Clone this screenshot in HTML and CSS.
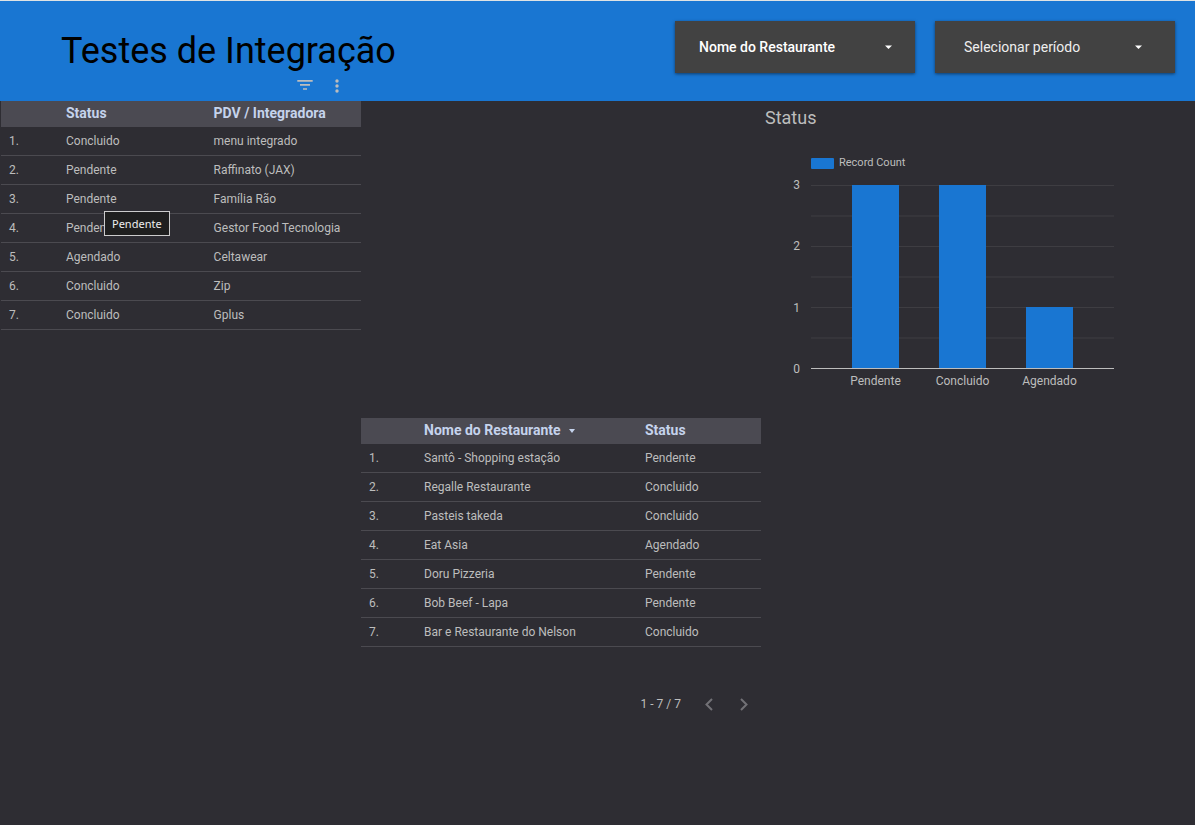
FILE: index.html
```html
<!DOCTYPE html>
<html lang="pt-BR">
<head>
<meta charset="utf-8">
<meta name="viewport" content="width=device-width, initial-scale=1">
<title>Testes de Integração</title>
<link rel="stylesheet" href="styles.css">
</head>
<body>
<header class="banner">
  <div class="banner-main">
    <h1 class="title">Testes de Integração</h1>
    <div class="tools">
      <button class="tool" type="button" aria-label="Filtrar">
        <svg width="16" height="16" viewBox="0 0 16 16"><path d="M.3 2h15.4v1.8H.3zM3 6h10v1.8H3zM6 10.2h4v1.6H6z"/></svg>
      </button>
      <button class="tool" type="button" aria-label="Mais opções">
        <svg width="16" height="16" viewBox="0 0 16 16"><circle cx="8" cy="3" r="1.7"/><circle cx="8" cy="8" r="1.7"/><circle cx="8" cy="13" r="1.7"/></svg>
      </button>
    </div>
  </div>
  <div class="filters">
    <div class="filter">
      <select class="filter-control filter-name" aria-label="Nome do Restaurante"><option>Nome do Restaurante</option></select>
      <svg class="caret" width="7" height="4" viewBox="0 0 7 4"><path d="M0 .5h7L3.500 4z"/></svg>
    </div>
    <button class="filter filter-control filter-period" type="button">
      <span>Selecionar período</span>
      <svg width="7" height="4" viewBox="0 0 7 4"><path d="M0 .5h7L3.500 4z"/></svg>
    </button>
  </div>
</header>
<main class="board">
  <section class="panel panel-pdv">
    <table class="table">
      <colgroup><col class="col-pdv-index"><col class="col-pdv-status"><col></colgroup>
      <thead><tr><th></th><th scope="col">Status</th><th scope="col">PDV / Integradora</th></tr></thead>
      <tbody>
        <tr><td>1.</td><td>Concluido</td><td>menu integrado</td></tr>
        <tr><td>2.</td><td>Pendente</td><td>Raffinato (JAX)</td></tr>
        <tr><td>3.</td><td>Pendente</td><td>Família Rão</td></tr>
        <tr><td>4.</td><td class="hovered">Pendente<span class="tooltip" role="tooltip">Pendente</span></td><td>Gestor Food Tecnologia</td></tr>
        <tr><td>5.</td><td>Agendado</td><td>Celtawear</td></tr>
        <tr><td>6.</td><td>Concluido</td><td>Zip</td></tr>
        <tr><td>7.</td><td>Concluido</td><td>Gplus</td></tr>
      </tbody>
    </table>
  </section>
  <section class="panel panel-restaurants">
    <table class="table">
      <colgroup><col class="col-name-index"><col><col class="col-name-status"></colgroup>
      <thead><tr><th></th><th scope="col" aria-sort="descending">Nome do Restaurante<svg class="sort" width="6" height="4" viewBox="0 0 6 4"><path d="M0 0h6L3 4z"/></svg></th><th scope="col">Status</th></tr></thead>
      <tbody>
        <tr><td>1.</td><td>Santô - Shopping estação</td><td>Pendente</td></tr>
        <tr><td>2.</td><td>Regalle Restaurante</td><td>Concluido</td></tr>
        <tr><td>3.</td><td>Pasteis takeda</td><td>Concluido</td></tr>
        <tr><td>4.</td><td>Eat Asia</td><td>Agendado</td></tr>
        <tr><td>5.</td><td>Doru Pizzeria</td><td>Pendente</td></tr>
        <tr><td>6.</td><td>Bob Beef - Lapa</td><td>Pendente</td></tr>
        <tr><td>7.</td><td>Bar e Restaurante do Nelson</td><td>Concluido</td></tr>
      </tbody>
    </table>
    <nav class="pager" aria-label="Paginação">
      <span>1 - 7 / 7</span>
      <button class="page" type="button" aria-label="Anterior"><svg width="8" height="14" viewBox="0 0 8 14"><path d="M7 2L1.500 7.500 7 13"/></svg></button>
      <button class="page" type="button" aria-label="Próxima"><svg width="8" height="14" viewBox="0 0 8 14"><path d="M1 2l5.500 5.500L1 13"/></svg></button>
    </nav>
  </section>
  <section class="panel panel-chart">
    <h2 class="chart-title">Status</h2>
    <div class="legend"><span class="swatch"></span>Record Count</div>
    <div class="chart">
      <div class="axis"><span>3</span><span>2</span><span>1</span><span>0</span></div>
      <div class="plot">
        <div class="slot"><div class="bar" style="height:100%"></div></div>
        <div class="slot"><div class="bar" style="height:100%"></div></div>
        <div class="slot"><div class="bar" style="height:33.33%"></div></div>
      </div>
      <div class="labels"><span>Pendente</span><span>Concluido</span><span>Agendado</span></div>
    </div>
  </section>
</main>
</body>
</html>
```
FILE: styles.css
```css
* { box-sizing: border-box; }

body {
  margin: 0;
  min-height: 100vh;
  background: #2e2d33;
  color: #bdbdbd;
  font: 12px/16px Roboto, "Liberation Sans", sans-serif;
}

button, select { font: inherit; border: 0; border-radius: 0; cursor: pointer; }
svg { display: block; }

.banner {
  display: flex;
  justify-content: space-between;
  align-items: flex-start;
  padding: 0 20px 0 61px;
  border-top: 1px solid #dfe3e4;
  background: #1976d2;
}
.banner-main { padding-top: 28px; }
.title { margin: 0; color: #000; font-size: 36px; line-height: 44px; font-weight: 400; }
.tools { display: flex; gap: 16px; justify-content: flex-end; padding: 5px 51px 7px 0; }
.tool { padding: 0; background: none; fill: #bdbdbd; }

.filters { display: flex; gap: 20px; padding-top: 20px; }
.filter { display: grid; width: 240px; box-shadow: 0 1px 3px rgba(0, 0, 0, .5); }
.filter-control {
  height: 52px;
  appearance: none;
  background: #424242;
  color: #fff;
  font-size: 14px;
}
.filter-name { grid-area: 1 / 1; width: 100%; padding: 0 24px; font-weight: 500; }
.caret { grid-area: 1 / 1; place-self: center end; margin-right: 23px; fill: #fff; pointer-events: none; }
.filter-period {
  display: flex;
  align-items: center;
  justify-content: space-between;
  padding: 0 33px 0 29px;
  color: #eee;
  fill: #fff;
}

.board { display: grid; grid-template-columns: 361fr 400fr 434fr; align-items: start; }
.panel-pdv { padding-left: 1px; }
.panel-restaurants { padding-top: 317px; }

.table { width: 100%; table-layout: fixed; border-collapse: separate; border-spacing: 0; text-align: left; }
.table th { height: 26px; padding: 0 8px 2px; background: #4b4a52; color: #c5d3ec; font-size: 14px; font-weight: 700; white-space: nowrap; }
.table td { height: 29px; padding: 0 8px; border-bottom: 1px solid #4b4a50; }
.col-pdv-index { width: 57px; }
.col-pdv-status { width: 41%; }
.col-name-index { width: 55px; }
.col-name-status { width: 31%; }
.sort { display: inline-block; margin-left: 8px; vertical-align: middle; fill: #c5d3ec; }

.hovered { position: relative; }
.tooltip {
  position: absolute;
  z-index: 1;
  top: -3px;
  left: 46px;
  padding: 4px 7px 3px;
  border: 1px solid #ccc;
  background: #1f1f1f;
  color: #eee;
  font-family: "Noto Sans", "Open Sans", sans-serif;
  font-size: 11px;
}

.pager { display: flex; justify-content: flex-end; align-items: center; gap: 24px; padding: 48px 10px 0 0; }
.page { padding: 2px 0; width: 11px; background: none; fill: none; stroke: #727176; stroke-width: 2; }

.panel-chart { padding: 7px 81px 0 4px; }
.chart-title { margin: 0; font-size: 18px; line-height: 20px; font-weight: 400; }
.legend { display: flex; align-items: center; gap: 5px; margin: 27px 0 14px 46px; font-size: 11px; }
.swatch { width: 23px; height: 11px; border-radius: 1px; background: #1976d2; }
.chart { display: grid; grid-template-columns: 46px 1fr; }
.axis { display: flex; flex-direction: column; justify-content: space-between; margin: -8px 11px -8px 0; text-align: right; }
.plot {
  display: grid;
  grid-template-columns: repeat(3, 1fr);
  height: 184px;
  padding: 0 21px;
  border-bottom: 1px solid #bdbdbd;
  background: linear-gradient(#3e3d42 1px, transparent 1px) 0 0 / 100% calc(100% / 6);
}
.slot { display: flex; align-items: flex-end; justify-content: center; }
.bar { width: 53%; background: #1976d2; }
.labels { grid-column: 2; display: grid; grid-template-columns: repeat(3, 1fr); padding: 4px 21px 0; text-align: center; }
```
